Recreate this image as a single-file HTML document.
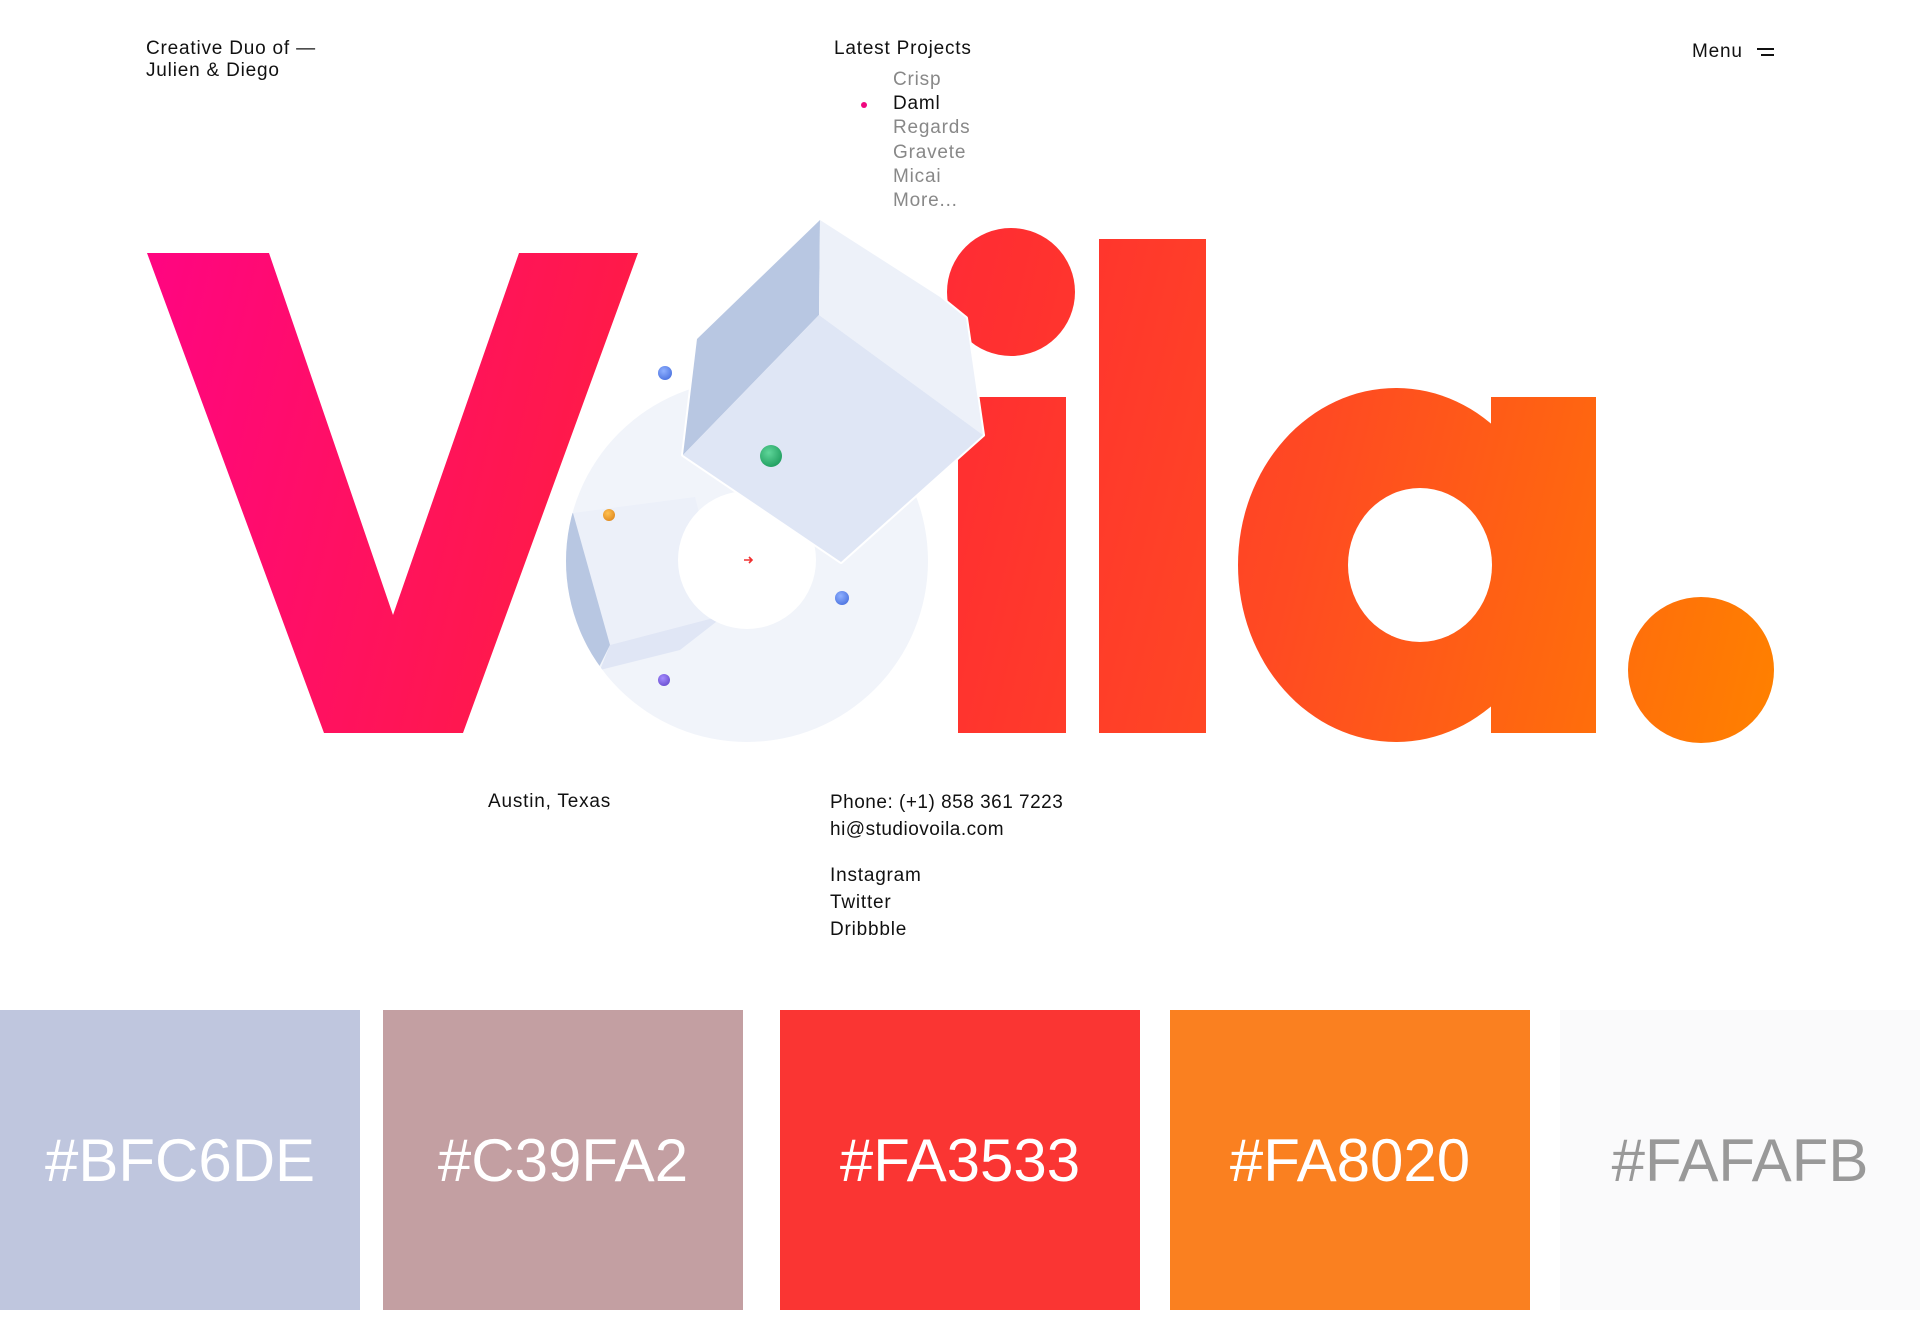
<!DOCTYPE html>
<html><head><meta charset="utf-8"><style>
html,body{margin:0;padding:0;background:#fff;width:1920px;height:1340px;overflow:hidden;font-family:"Liberation Sans",sans-serif;color:#111}
.t{position:absolute;font-size:19px;line-height:22px;white-space:nowrap;letter-spacing:0.8px}
.sw{position:absolute;top:1010px;height:300px;display:flex;align-items:center;justify-content:center;color:#fff;font-size:60px;font-family:"Liberation Sans",sans-serif}
</style></head><body>
<div class="t" style="left:146px;top:38px">Creative Duo of —<br>Julien &amp; Diego</div>
<div class="t" style="left:834px;top:38px">Latest Projects</div>
<div class="t" style="left:893px;top:68px;line-height:24.2px;color:#888">Crisp<br><span style="color:#111">Daml</span><br>Regards<br>Gravete<br>Micai<br>More...</div>
<div style="position:absolute;left:861px;top:102px;width:6px;height:6px;border-radius:50%;background:#f0077f"></div>
<div class="t" style="left:1692px;top:41px">Menu</div>
<div style="position:absolute;left:1757px;top:48px;width:17px;height:2px;background:#111"></div>
<div style="position:absolute;left:1761px;top:54px;width:13px;height:2px;background:#111"></div>

<svg style="position:absolute;left:0;top:0" width="1920" height="800">
<defs>
<linearGradient id="g" gradientUnits="userSpaceOnUse" x1="147" y1="300" x2="1775" y2="700">
<stop offset="0" stop-color="#ff0580"/><stop offset="0.28" stop-color="#ff1a48"/><stop offset="0.5" stop-color="#ff3030"/><stop offset="0.7" stop-color="#ff4a22"/><stop offset="1" stop-color="#ff8000"/></linearGradient>
<radialGradient id="b1" cx="0.4" cy="0.35" r="0.7"><stop offset="0" stop-color="#8fb0ff"/><stop offset="1" stop-color="#4d74e0"/></radialGradient>
<radialGradient id="b2" cx="0.4" cy="0.35" r="0.7"><stop offset="0" stop-color="#5fd69a"/><stop offset="1" stop-color="#1f9d5e"/></radialGradient>
<radialGradient id="b3" cx="0.4" cy="0.35" r="0.7"><stop offset="0" stop-color="#ffc050"/><stop offset="1" stop-color="#e08a20"/></radialGradient>
<radialGradient id="b4" cx="0.4" cy="0.35" r="0.7"><stop offset="0" stop-color="#a58bff"/><stop offset="1" stop-color="#6a4fd0"/></radialGradient>
<clipPath id="cc"><circle cx="747" cy="561" r="181"/></clipPath>
<mask id="am"><rect width="1920" height="800" fill="#fff"/><ellipse cx="1420" cy="565" rx="72" ry="77" fill="#000"/></mask>
</defs>
<g fill="url(#g)">
<polygon points="147,253 269,253 393,615 519,253 638,253 463,733 324,733"/>
<circle cx="1011" cy="292" r="64"/>
<rect x="958" y="397" width="108" height="336"/>
<rect x="1099" y="239" width="107" height="494"/>
<g mask="url(#am)"><ellipse cx="1396" cy="565" rx="158" ry="177"/><rect x="1491" y="397" width="105" height="336"/></g>
<circle cx="1701" cy="670" r="73"/>
</g>
<circle cx="747" cy="561" r="181" fill="#f1f4fa"/>
<g clip-path="url(#cc)">
<polygon points="573,513 695,497 725,615 610,645" fill="#ecf0f9"/>
<polygon points="567,515 573,513 610,645 595,675 560,600" fill="#b8c7e2"/>
<polygon points="610,645 725,615 680,650 600,670" fill="#e0e6f5"/>
</g>
<circle cx="747" cy="560" r="69" fill="#fff"/>
<path d="M744 560h8m-3-3l3 3-3 3" stroke="#f03030" stroke-width="1.6" fill="none"/>
<polygon points="820,220 940,297 966,318 983,435 819,315 697,339 683,455 841,562 983,435" fill="#fff" stroke="#fff" stroke-width="4" stroke-linejoin="round"/>
<polygon points="820,220 697,339 683,455 819,315" fill="#b8c7e2"/>
<polygon points="820,220 940,297 966,318 983,435 819,315" fill="#edf1f9"/>
<polygon points="819,315 683,455 841,562 983,435" fill="#dfe6f5"/>
<circle cx="665" cy="373" r="7" fill="url(#b1)"/>
<circle cx="771" cy="456" r="11" fill="url(#b2)"/>
<circle cx="609" cy="515" r="6" fill="url(#b3)"/>
<circle cx="842" cy="598" r="7" fill="url(#b1)"/>
<circle cx="664" cy="680" r="6" fill="url(#b4)"/>
</svg>

<div class="t" style="left:488px;top:791px">Austin, Texas</div>
<div class="t" style="left:830px;top:789px;line-height:27px;letter-spacing:0.5px">Phone: (+1) 858 361 7223<br>hi@studiovoila.com</div>
<div class="t" style="left:830px;top:862px;line-height:27px">Instagram<br>Twitter<br>Dribbble</div>

<div class="sw" style="left:0;width:360px;background:#bfc6de">#BFC6DE</div>
<div class="sw" style="left:383px;width:360px;background:#c39fa2">#C39FA2</div>
<div class="sw" style="left:780px;width:360px;background:#fa3533">#FA3533</div>
<div class="sw" style="left:1170px;width:360px;background:#fa8020">#FA8020</div>
<div class="sw" style="left:1560px;width:360px;background:#fafafb;color:#999">#FAFAFB</div>
</body></html>
